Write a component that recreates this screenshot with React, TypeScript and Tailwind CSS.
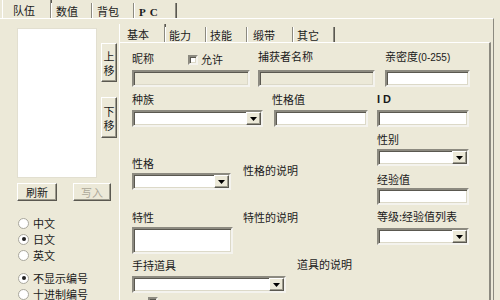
import React from "react";

const sunken =
  "border-2 border-t-[#8c8a80] border-l-[#8c8a80] border-r-[#f4f3ee] border-b-[#f4f3ee] shadow-[inset_1px_1px_0_#5a5850,inset_-1px_-1px_0_#dcd9c8]";
const raised =
  "border border-t-white border-l-white border-r-[#5a5850] border-b-[#5a5850] shadow-[inset_-1px_-1px_0_#9c9a8c] bg-[#ECE9D8]";

const Label = ({ children, className = "" }: { children: React.ReactNode; className?: string }) => (
  <div className={`h-[14px] leading-[14px] whitespace-nowrap ${className}`}>{children}</div>
);

const Arrow = () => (
  <svg width="7" height="4" viewBox="0 0 7 4">
    <path d="M0 0h7L3.5 4z" fill="#000" />
  </svg>
);

const Select = ({ className = "" }: { className?: string }) => (
  <div className={`${sunken} bg-white h-[17px] flex justify-end ${className}`}>
    <div className={`${raised} w-[15px] h-full flex items-center justify-center`}>
      <Arrow />
    </div>
  </div>
);

const Radio = ({ label, checked }: { label: string; checked?: boolean }) => (
  <div className="flex items-center h-[16px] ml-[18px]">
    <span className="w-[11px] h-[11px] rounded-full bg-white border border-[#a9a79c] flex items-center justify-center">
      {checked && <span className="w-[4px] h-[4px] rounded-full bg-[#222]" />}
    </span>
    <span className="ml-[4px]">{label}</span>
  </div>
);

const Tab = ({ label, className = "", active }: { label: React.ReactNode; className?: string; active?: boolean }) => (
  <div
    className={`border-l border-l-white border-r border-r-[#8c8a80] shadow-[1px_0_0_#5a5850] leading-[14px] ${
      active ? "h-[18px] pt-[3px]" : "h-[15px] pt-[1px]"
    } ${className}`}
  >
    {label}
  </div>
);

// vertical two-character button (上移 / 下移)
const VButton = ({ top, bottom, className = "" }: { top: string; bottom: string; className?: string }) => (
  <div className={`${raised} w-[16px] flex flex-col items-center justify-center ${className}`}>
    <span className="block h-[14px] leading-[14px]">{top}</span>
    <span className="block h-[14px] leading-[14px]">{bottom}</span>
  </div>
);

export default function App() {
  return (
    <div className="w-[500px] h-[300px] overflow-hidden bg-[#ECE9D8] text-[#1a1a1a] text-[11px] font-['Noto_Sans_CJK_SC','Liberation_Sans',sans-serif]">
      {/* outer tabs */}
      <div className="h-[18px] flex items-end pl-[2px]">
        <Tab active label="队伍" className="w-[49px] pl-[10px] border-l-transparent" />
        <Tab label="数值" className="w-[41px] pl-[4px]" />
        <Tab label="背包" className="w-[42px] pl-[4px]" />
        <Tab
          label={<span className="font-bold tracking-[4px] font-['Liberation_Serif',serif]">PC</span>}
          className="w-[42px] pl-[4px]"
        />
      </div>

      <div className="flex border-t border-white h-[282px] mr-[6px] border-r border-r-[#8c8a80]">
        {/* left column */}
        <div className="w-[119px] shrink-0 flex flex-col">
          <div className="flex mt-[9px] ml-[17px]">
            <div className="bg-white w-[80px] h-[150px] border border-[#e2dfd0]" />
            <div className="flex flex-col ml-[4px]">
              <VButton top="上" bottom="移" className="mt-[15px] h-[39px]" />
              <VButton top="下" bottom="移" className="mt-[15px] h-[41px]" />
            </div>
          </div>
          <div className="flex mt-[5px] ml-[17px] gap-[16px]">
            <div className={`${raised} w-[40px] h-[18px] flex items-center justify-center`}>刷新</div>
            <div className={`${raised} w-[38px] h-[18px] flex items-center justify-center text-[#aca899]`}>写入</div>
          </div>
          <div className="mt-[14px]">
            <Radio label="中文" />
            <Radio label="日文" checked />
            <Radio label="英文" />
          </div>
          <div className="mt-[7px]">
            <Radio label="不显示编号" checked />
            <Radio label="十进制编号" />
          </div>
        </div>

        {/* inner tab control */}
        <div className="flex-1 flex flex-col pt-[5px] mr-[2px]">
          <div className="h-[18px] flex items-end">
            <Tab active label="基本" className="w-[46px] pl-[7px]" />
            <Tab label="能力" className="w-[41px] pl-[3px]" />
            <Tab label="技能" className="w-[41px] pl-[3px]" />
            <Tab label="缎带" className="w-[46px] pl-[5px]" />
            <Tab label="其它" className="w-[41px] pl-[3px]" />
          </div>
          <div className="flex-1 border-t border-t-white border-l border-l-white border-r-2 border-r-[#8c8a80] pl-[12px] pt-[6px] flex flex-col">
            {/* row A */}
            <div className="flex items-start">
              <div className="w-[118px] flex flex-col">
                <div className="h-[21px] flex items-start">
                  <Label className="mt-[2px]">昵称</Label>
                  <div className={`${sunken} bg-white w-[10px] h-[10px] ml-[34px] mt-[6px]`} />
                  <Label className="ml-[3px] mt-[3px]">允许</Label>
                </div>
                <div className={`${sunken} bg-[#ECE9D8] h-[17px]`} />
              </div>
              <div className="w-[117px] ml-[8px] flex flex-col">
                <Label>捕获者名称</Label>
                <div className={`${sunken} bg-[#ECE9D8] h-[17px] mt-[7px]`} />
              </div>
              <div className="w-[85px] ml-[10px] flex flex-col">
                <Label>
                  亲密度<span className="text-[10px] font-['Liberation_Sans',sans-serif]">(0-255)</span>
                </Label>
                <div className={`${sunken} bg-white h-[17px] mt-[7px]`} />
              </div>
            </div>

            {/* row B */}
            <div className="flex items-start mt-[5px]">
              <div className="w-[131px] flex flex-col">
                <Label>种族</Label>
                <Select className="mt-[4px]" />
              </div>
              <div className="w-[94px] ml-[11px] flex flex-col">
                <Label className="-ml-[2px]">性格值</Label>
                <div className={`${sunken} bg-white h-[17px] mt-[4px]`} />
              </div>
              <div className="w-[92px] ml-[9px] flex flex-col">
                <Label className="font-bold tracking-[3px] font-['Liberation_Sans',sans-serif]">ID</Label>
                <div className={`${sunken} bg-white h-[17px] mt-[4px]`} />
              </div>
            </div>

            {/* row C */}
            <div className="flex items-start mt-[5px]">
              <div className="w-[245px] flex items-start">
                <div className="w-[99px] flex flex-col mt-[24px]">
                  <Label>性格</Label>
                  <Select className="mt-[3px]" />
                </div>
                <Label className="ml-[12px] mt-[31px]">性格的说明</Label>
              </div>
              <div className="w-[92px] flex flex-col">
                <Label>性别</Label>
                <Select className="mt-[3px]" />
                <Label className="mt-[6px]">经验值</Label>
                <div className={`${sunken} bg-white h-[17px] mt-[2px]`} />
              </div>
            </div>

            {/* row D */}
            <div className="flex items-start mt-[4px]">
              <div className="w-[245px] flex items-start">
                <div className="w-[101px] flex flex-col mt-[1px]">
                  <Label>特性</Label>
                  <div className={`${sunken} bg-white h-[27px] mt-[3px]`} />
                </div>
                <Label className="ml-[10px] mt-[1px]">特性的说明</Label>
              </div>
              <div className="w-[92px] flex flex-col">
                <Label>等级:经验值列表</Label>
                <Select className="mt-[5px]" />
              </div>
            </div>

            {/* row E */}
            <div className="flex items-start mt-[3px]">
              <div className="w-[154px] flex flex-col mt-[1px]">
                <Label>手持道具</Label>
                <Select className="mt-[4px]" />
              </div>
              <Label className="ml-[11px]">道具的说明</Label>
            </div>

            {/* row F, cut off by the window edge */}
            <div className="flex items-start mt-[4px] ml-[16px]">
              <div className={`${sunken} bg-white w-[10px] h-[10px]`} />
            </div>
          </div>
        </div>
      </div>
    </div>
  );
}
